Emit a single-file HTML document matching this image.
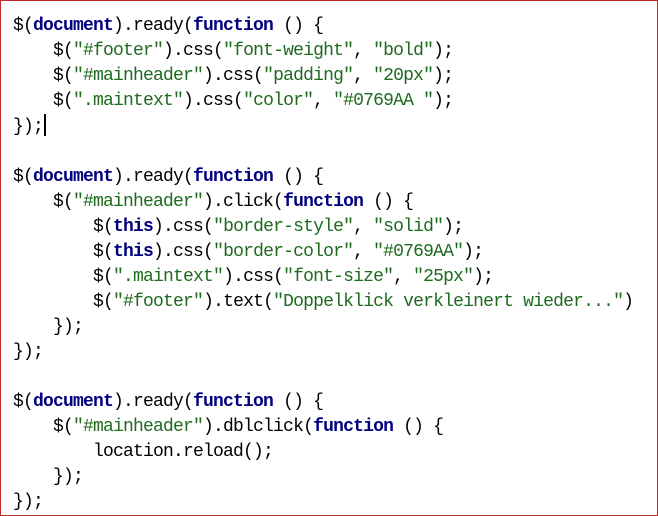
<!DOCTYPE html>
<html><head><style>
html,body{margin:0;padding:0;background:#fff;}
.box{position:absolute;left:0;top:0;width:656px;height:514px;border:1px solid #c0282a;background:#fff;}
pre{position:absolute;left:13px;top:14px;margin:0;font-family:"Liberation Mono",monospace;font-size:18px;letter-spacing:-0.8px;line-height:25px;color:#000;}
.k{color:#00007f;font-weight:bold;}
.s{color:#1e6a1e;}
.c{display:inline-block;width:2px;height:22px;background:#000;vertical-align:-5px;margin-left:1px;}
</style></head><body><div class="box"></div>
<pre>$(<span class="k">document</span>).ready(<span class="k">function</span> () {
    $(<span class="s">"#footer"</span>).css(<span class="s">"font-weight"</span>, <span class="s">"bold"</span>);
    $(<span class="s">"#mainheader"</span>).css(<span class="s">"padding"</span>, <span class="s">"20px"</span>);
    $(<span class="s">".maintext"</span>).css(<span class="s">"color"</span>, <span class="s">"#0769AA "</span>);
});<span class="c"></span>

$(<span class="k">document</span>).ready(<span class="k">function</span> () {
    $(<span class="s">"#mainheader"</span>).click(<span class="k">function</span> () {
        $(<span class="k">this</span>).css(<span class="s">"border-style"</span>, <span class="s">"solid"</span>);
        $(<span class="k">this</span>).css(<span class="s">"border-color"</span>, <span class="s">"#0769AA"</span>);
        $(<span class="s">".maintext"</span>).css(<span class="s">"font-size"</span>, <span class="s">"25px"</span>);
        $(<span class="s">"#footer"</span>).text(<span class="s">"Doppelklick verkleinert wieder..."</span>)
    });
});

$(<span class="k">document</span>).ready(<span class="k">function</span> () {
    $(<span class="s">"#mainheader"</span>).dblclick(<span class="k">function</span> () {
        location.reload();
    });
});</pre>
</body></html>
